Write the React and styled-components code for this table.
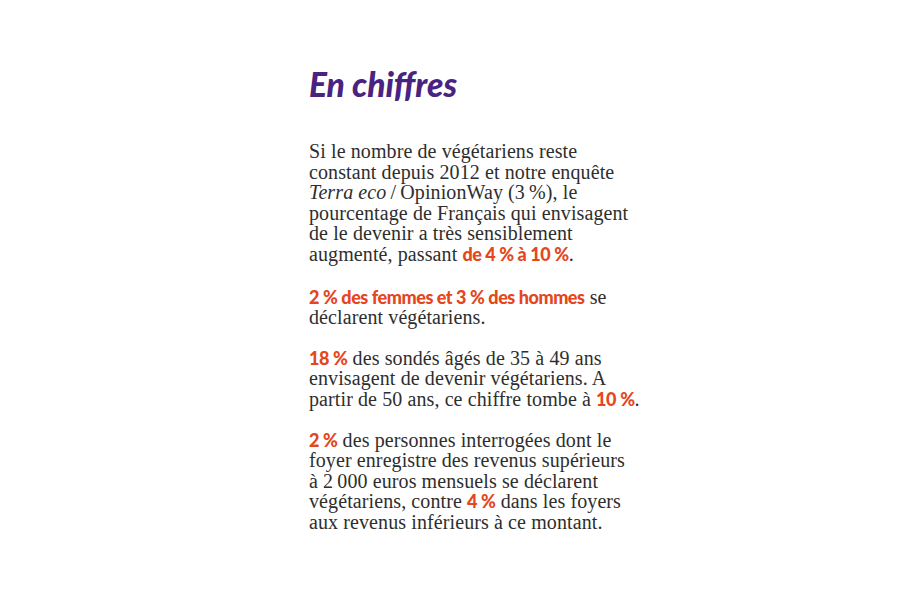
import React from 'react';
import styled, { createGlobalStyle } from 'styled-components';

const GlobalStyle = createGlobalStyle`
  html, body {
    margin: 0;
    padding: 0;
    background: #ffffff;
  }
`;

const Page = styled.div`
  width: 900px;
  height: 600px;
  box-sizing: border-box;
  padding: 64px 0 0 309px;
`;

const Column = styled.article`
  width: 320px;
  display: flex;
  flex-direction: column;
`;

const Title = styled.h2`
  margin: 0 0 37px;
  font-family: Lato, 'Open Sans', sans-serif;
  font-weight: 900;
  font-style: italic;
  font-size: 33.5px;
  line-height: 40px;
  color: #4a2381;
`;

const Paragraph = styled.p`
  margin: 0 0 ${(p) => p.space ?? 20}px;
  font-family: 'Liberation Serif', serif;
  font-size: 20px;
  line-height: 20.6px;
  letter-spacing: 0.1px;
  color: #2e2e2e;
`;

const Line = styled.span`
  display: block;
  white-space: nowrap;
`;

const Figure = styled.strong`
  font-family: Lato, 'Open Sans', sans-serif;
  font-weight: 900;
  font-size: 18px;
  line-height: 1;
  letter-spacing: -0.45px;
  color: #e4461d;
`;

const Italic = styled.em`
  font-style: italic;
`;

const nb = '\u202F';

export default function App() {
  return (
    <>
      <GlobalStyle />
      <Page>
        <Column>
          <Title>En chiffres</Title>
          <Paragraph space={22}>
            <Line>Si le nombre de végétariens reste</Line>
            <Line>constant depuis 2012 et notre enquête</Line>
            <Line>
              <Italic>Terra eco</Italic>{nb}/{nb}OpinionWay (3{nb}%), le
            </Line>
            <Line>pourcentage de Français qui envisagent</Line>
            <Line>de le devenir a très sensiblement</Line>
            <Line>
              augmenté, passant <Figure>de 4{nb}% à 10{nb}%</Figure>.
            </Line>
          </Paragraph>
          <Paragraph>
            <Line>
              <Figure>2{nb}% des femmes et 3{nb}% des hommes</Figure> se
            </Line>
            <Line>déclarent végétariens.</Line>
          </Paragraph>
          <Paragraph>
            <Line>
              <Figure>18{nb}%</Figure> des sondés âgés de 35 à 49 ans
            </Line>
            <Line>envisagent de devenir végétariens. A</Line>
            <Line>
              partir de 50 ans, ce chiffre tombe à <Figure>10{nb}%</Figure>.
            </Line>
          </Paragraph>
          <Paragraph space={0}>
            <Line>
              <Figure>2{nb}%</Figure> des personnes interrogées dont le
            </Line>
            <Line>foyer enregistre des revenus supérieurs</Line>
            <Line>à 2{nb}000 euros mensuels se déclarent</Line>
            <Line>
              végétariens, contre <Figure>4{nb}%</Figure> dans les foyers
            </Line>
            <Line>aux revenus inférieurs à ce montant.</Line>
          </Paragraph>
        </Column>
      </Page>
    </>
  );
}
